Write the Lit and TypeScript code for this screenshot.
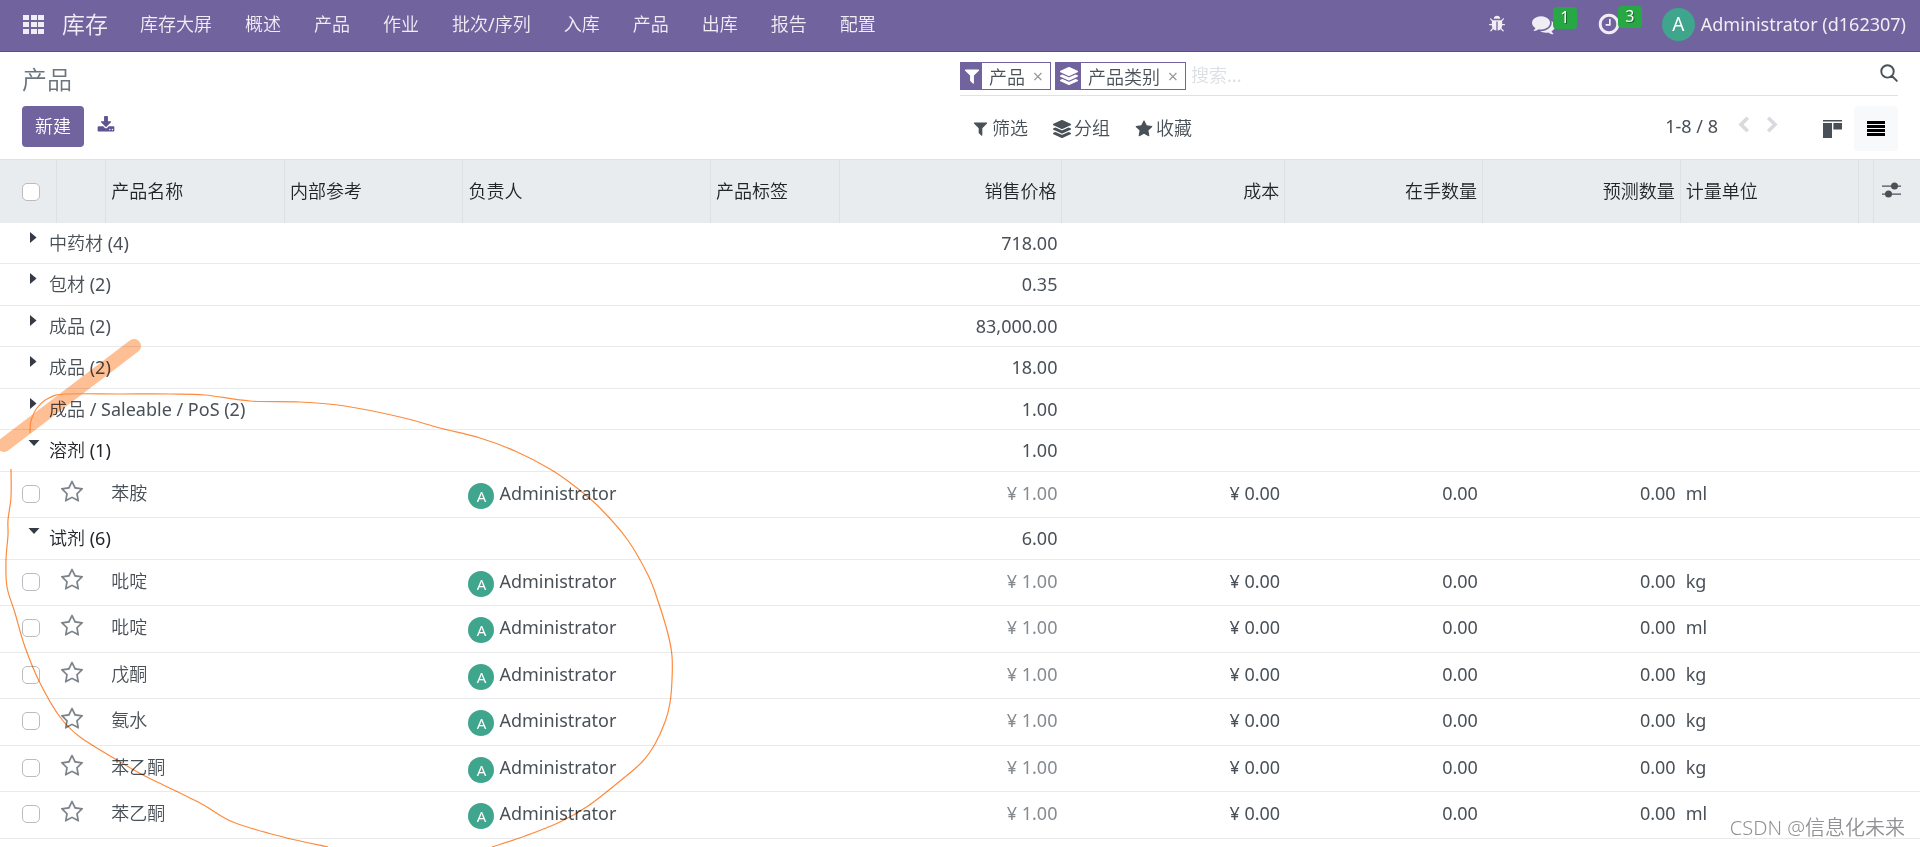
import { LitElement, html, css, svg, nothing } from "lit";
import { customElement, state } from "lit/decorators.js";

type Product = { name: string; unit: string };
type Group = { label: string; total: string; open: boolean; items: Product[] };

const icons = {
  bug: "M1696 960q0 26-19 45t-45 19h-224q0 171-67 290l208 209q19 19 19 45t-19 45q-18 19-45 19t-45-19l-198-197q-5 5-15 13t-42 28.5-65 36.5-82 29-97 13v-896h-128v896q-51 0-101.5-13.5t-87-33-66-39-43.5-32.5l-15-14-183 207q-20 21-48 21-24 0-43-16-19-18-20.5-44.5t15.5-46.5l202-227q-58-114-58-274h-224q-26 0-45-19t-19-45 19-45 45-19h224v-294l-173-173q-19-19-19-45t19-45 45-19 45 19l173 173h844l173-173q19-19 45-19t45 19 19 45-19 45l-173 173v294h224q26 0 45 19t19 45zm-480-576h-640q0-133 93.5-226.5t226.5-93.5 226.5 93.5 93.5 226.5z",
  comments: "M1408 768q0 139-94 257t-256.5 186.5-353.5 68.5q-86 0-176-16-124 88-278 128-36 9-86 16h-3q-11 0-20.5-8t-11.5-21q-1-3-1-6.5t.5-6.5 2-6l2.5-5 3.5-5.5 4-5 4.5-5 4-4.5q5-6 23-25t26-29.5 22.5-29 25-38.5 20.5-44q-124-72-195-177t-71-224q0-139 94-257t256.5-186.5 353.5-68.5 353.5 68.5 256.5 186.5 94 257zm384 256q0 120-71 224.5t-195 176.5q10 24 20.5 44t25 38.5 22.5 29 26 29.5 23 25q1 1 4 4.5t4.5 5 4 5 3.5 5.5l2.500 5 2 6 .5 6.500-1 6.500q-3 14-13 22t-22 7q-50-7-86-16-154-40-278-128-90 16-176 16-271 0-472-132 58 4 88 4 161 0 309-45t264-129q125-92 192-212t67-254q0-77-23-152 129 71 204 178t75 230z",
  clock: "M1024 544v448q0 14-9 23t-23 9h-320q-14 0-23-9t-9-23v-64q0-14 9-23t23-9h224v-352q0-14 9-23t23-9h64q14 0 23 9t9 23zm416 352q0-148-73-273t-198-198-273-73-273 73-198 198-73 273 73 273 198 198 273 73 273-73 198-198 73-273zm224 0q0 209-103 385.5t-279.5 279.5-385.5 103-385.5-103-279.5-279.5-103-385.5 103-385.5 279.5-279.5 385.5-103 385.5 103 279.5 279.5 103 385.5z",
  download: "M1344 1344q0-26-19-45t-45-19-45 19-19 45 19 45 45 19 45-19 19-45zm256 0q0-26-19-45t-45-19-45 19-19 45 19 45 45 19 45-19 19-45zm128-224v320q0 40-28 68t-68 28h-1472q-40 0-68-28t-28-68v-320q0-40 28-68t68-28h465l135 136q58 56 136 56t136-56l136-136h464q40 0 68 28t28 68zm-325-569q17 41-14 70l-448 448q-18 19-45 19t-45-19l-448-448q-31-29-14-70 17-39 59-39h256v-448q0-26 19-45t45-19h256q26 0 45 19t19 45v448h256q42 0 59 39z",
  filter: "M1595 295q17 41-14 70l-493 493v742q0 42-39 59-13 5-25 5-27 0-45-19l-256-256q-19-19-19-45v-486l-493-493q-31-29-14-70 17-39 59-39h1280q42 0 59 39z",
  star: "M1728 647q0 22-26 48l-363 354 86 500q1 7 1 20 0 21-10.5 35.5t-30.5 14.5q-19 0-40-12l-449-236-449 236q-22 12-40 12-21 0-31.5-14.5t-10.5-35.5q0-6 2-20l86-500-364-354q-25-27-25-48 0-37 56-46l502-73 225-455q19-41 49-41t49 41l225 455 502 73q56 9 56 46z",
  starOutline: "M1201 1004l306-297-422-62-189-382-189 382-422 62 306 297-73 421 378-199 377 199zm527-357q0 22-26 48l-363 354 86 500q1 7 1 20 0 50-41 50-19 0-40-12l-449-236-449 236q-22 12-40 12-21 0-31.5-14.5t-10.5-35.5q0-6 2-20l86-500-364-354q-25-27-25-48 0-37 56-46l502-73 225-455q19-41 49-41t49 41l225 455 502 73q56 9 56 46z",
  layers: "M12.41 148.02l232.94 105.67c6.8 3.09 14.49 3.09 21.29 0l232.94-105.67c16.55-7.51 16.55-32.52 0-40.03L266.65 2.31a25.607 25.607 0 0 0-21.29 0L12.41 107.98c-16.55 7.51-16.55 32.53 0 40.04zm487.18 88.28l-58.09-26.33-161.64 73.27c-7.56 3.43-15.59 5.17-23.86 5.17s-16.29-1.74-23.86-5.17L70.51 209.97l-58.1 26.33c-16.55 7.5-16.55 32.5 0 40l232.94 105.59c6.8 3.08 14.49 3.08 21.29 0L499.59 276.3c16.55-7.5 16.55-32.5 0-40zm0 127.8l-57.87-26.23-161.86 73.37c-7.56 3.43-15.59 5.17-23.86 5.17s-16.29-1.74-23.86-5.17L70.29 337.87 12.41 364.1c-16.55 7.5-16.55 32.5 0 40l232.94 105.59c6.8 3.08 14.49 3.08 21.29 0L499.59 404.1c16.55-7.5 16.55-32.5 0-40z",
};

const icon = (path: string, size: number, box = "0 0 1792 1792") => html`
  <svg class="icon" width=${size} height=${size} viewBox=${box} aria-hidden="true">${svg`<path d=${path} />`}</svg>`;

/** Smooth curve through the given points (Catmull-Rom turned into cubic segments). */
function curve(points: number[][]): string {
  let d = `M${points[0][0]} ${points[0][1]}`;
  for (let i = 0; i < points.length - 1; i++) {
    const a = points[Math.max(i - 1, 0)];
    const b = points[i];
    const c = points[i + 1];
    const e = points[Math.min(i + 2, points.length - 1)];
    d += `C${b[0] + (c[0] - a[0]) / 6} ${b[1] + (c[1] - a[1]) / 6} ${c[0] - (e[0] - b[0]) / 6} ${c[1] - (e[1] - b[1]) / 6} ${c[0]} ${c[1]}`;
  }
  return d;
}

const loopTop = curve([
  [30, 433], [31, 421], [37, 408], [49, 398], [66, 394], [120, 394], [170, 394], [205, 395], [250, 401],
  [300, 402], [345, 406], [400, 417], [440, 428], [480, 438], [515, 451], [550, 469], [577, 488], [600, 508],
  [627, 539], [648, 575], [658, 601], [668, 634], [672, 656], [672, 680], [670, 703], [665, 722], [655, 744],
  [642, 762], [620, 781], [588, 806], [560, 822], [525, 836], [492, 847],
]);
const loopLeft = curve([
  [11, 469], [11, 497], [8, 520], [8, 535], [6, 560], [7, 587], [15, 613], [25, 647], [40, 683], [60, 717],
  [80, 737], [117, 760], [143, 775], [200, 803], [233, 822], [283, 837], [328, 847],
]);

const apps = ["库存大屏", "概述", "产品", "作业", "批次/序列", "入库", "产品", "出库", "报告", "配置"];

@customElement("app-root")
export class AppRoot extends LitElement {
  @state() private groups: Group[] = [
    { label: "中药材 (4)", total: "718.00", open: false, items: [] },
    { label: "包材 (2)", total: "0.35", open: false, items: [] },
    { label: "成品 (2)", total: "83,000.00", open: false, items: [] },
    { label: "成品 (2)", total: "18.00", open: false, items: [] },
    { label: "成品 / Saleable / PoS (2)", total: "1.00", open: false, items: [] },
    { label: "溶剂 (1)", total: "1.00", open: true, items: [{ name: "苯胺", unit: "ml" }] },
    {
      label: "试剂 (6)", total: "6.00", open: true, items: [
        { name: "吡啶", unit: "kg" },
        { name: "吡啶", unit: "ml" },
        { name: "戊酮", unit: "kg" },
        { name: "氨水", unit: "kg" },
        { name: "苯乙酮", unit: "kg" },
        { name: "苯乙酮", unit: "ml" },
      ],
    },
  ];

  static styles = css`
    :host {
      display: block;
      position: relative;
      min-height: 100vh;
      overflow: hidden;
      background: #fff;
      color: #495057;
      font: 400 18px/27px "Noto Sans", "Noto Sans CJK SC DemiLight", "Noto Sans CJK SC", sans-serif;
    }
    * { box-sizing: border-box; }
    button, input { font: inherit; color: inherit; margin: 0; }
    button { padding: 0; border: 0; background: none; cursor: pointer; }
    a { color: inherit; text-decoration: none; }
    .icon { display: block; flex: none; fill: currentColor; }

    .navbar {
      display: flex;
      align-items: center;
      height: 52px;
      padding: 0 14px 3px 23px;
      background: #71639e;
      border-bottom: 1px solid #5a4f7f;
      color: #f0eef5;
      white-space: nowrap;
    }
    .brand { margin: 0 32px 0 18px; font-size: 23px; }
    .menu { display: flex; gap: 33px; flex: 1; }
    .tray { display: flex; align-items: center; }
    .tray-button { position: relative; display: block; }
    .bug { margin-right: 26px; }
    .chat { margin-right: 42px; }
    .activity { margin-right: 41px; }
    .badge {
      position: absolute;
      left: 21px;
      top: -6px;
      min-width: 24px;
      height: 22px;
      border-radius: 4px;
      background: #28a745;
      color: #fff;
      font-size: 16px;
      line-height: 20px;
      text-align: center;
      text-shadow: 1px 1px 0 rgba(0, 0, 0, 0.4);
    }
    .user { display: flex; align-items: center; gap: 6px; }
    .avatar {
      display: inline-flex;
      align-items: center;
      justify-content: center;
      flex: none;
      width: 26px;
      height: 26px;
      border-radius: 50%;
      background: #40a58d;
      color: #fff;
      font-size: 15px;
    }
    .avatar.large { width: 33px; height: 33px; font-size: 19px; }

    .panel {
      display: grid;
      grid-template-columns: 1fr 1fr;
      padding: 10px 22px 8px;
      border-bottom: 1px solid #dee2e6;
    }
    .title { margin: 0; font-size: 25px; font-weight: 400; line-height: 34px; color: #6c757d; }
    .search {
      display: flex;
      align-items: flex-start;
      gap: 4px;
      height: 34px;
      border-bottom: 1px solid #dee2e6;
    }
    .facet { display: flex; height: 28px; border: 1px solid #71639e; }
    .facet-icon {
      display: flex;
      align-items: center;
      justify-content: center;
      width: 21px;
      background: #71639e;
      color: #fff;
    }
    .facet-icon.wide { width: 25px; }
    .facet-label { padding: 1px 7px 0; line-height: 26px; }
    .facet-remove { width: 12px; margin-right: 6px; color: #999; line-height: 26px; }
    .search-input {
      flex: 1;
      min-width: 0;
      height: 27px;
      padding: 0 1px;
      border: 0;
      outline: 0;
      background: none;
    }
    .search-input::placeholder { color: #dcdfe4; opacity: 1; }
    .search-button { padding-top: 2px; }
    .actions { display: flex; align-items: flex-start; gap: 13px; padding-top: 10px; }
    .create {
      padding: 7px 13px;
      border-radius: 4px;
      background: #71639e;
      color: #fff;
    }
    .export { padding-top: 10px; color: #5f5391; }
    .tools { display: flex; align-items: flex-start; padding: 10px 0 0 12px; }
    .filters { display: flex; flex: 1; gap: 25px; padding-top: 9px; }
    .filter { display: flex; align-items: center; gap: 3px; }
    .pager { padding-top: 7px; margin-right: 20px; }
    .pager-nav { display: flex; gap: 16px; padding: 10px 0; margin-right: 32px; color: #d7dade; }
    .view { display: flex; align-items: center; justify-content: center; width: 44px; height: 45px; border-radius: 4px; }
    .view.active { background: #f8f9fa; color: #000; }
    .views { display: flex; }

    .list { width: 100%; border-collapse: separate; border-spacing: 0; table-layout: fixed; }
    .c-check { width: 56px; }
    .c-star { width: 49px; }
    .c-name, .c-ref, .c-unit { width: 9.3%; }
    .c-owner { width: 12.9%; }
    .c-tags { width: 6.7%; }
    .c-price, .c-cost { width: 11.6%; }
    .c-qty { width: 10.3%; }
    .c-space { width: 15px; }
    .c-config { width: 45px; }
    th {
      height: 63px;
      padding: 0 5px;
      background: #e8ecef;
      border-right: 1px solid #dde1e5;
      color: #212529;
      font-weight: 400;
      text-align: left;
    }
    th:last-child { border-right: 0; padding: 0 0 0 8px; color: #495057; }
    th.check { padding: 0 0 0 22px; }
    .num { text-align: right; }
    td { padding: 8px 5px 0; border-bottom: 1px solid #e9eaec; vertical-align: top; white-space: nowrap; }
    td.check { padding: 13px 0 0 22px; }
    td.favorite { padding: 8px 0 0 3px; }
    td.muted { color: #868b90; }
    .row { height: 46px; }
    .group { height: 41px; }
    .row:nth-child(even) { height: 47px; }
    .group:nth-child(even) { height: 42px; }
    .group td { padding-top: 7px; }
    .group td:first-child { padding-left: 28px; }
    .toggle { display: flex; }
    .toggle.open { color: #212529; }
    .caret { width: 21px; padding-top: 2px; color: #343a46; }
    .checkbox {
      appearance: none;
      display: block;
      width: 18px;
      height: 18px;
      border: 1px solid #b9bcc0;
      border-radius: 5px;
      background: #fff;
    }
    .favorite button { display: block; color: #7d838a; }
    .owner { display: flex; gap: 5px; }
    .owner .avatar { margin-top: 3px; }

    .marks { position: absolute; left: 0; top: 0; pointer-events: none; mix-blend-mode: multiply; fill: none; }
    .watermark {
      position: absolute;
      right: 15px;
      bottom: 4px;
      color: #8f9194;
      font-size: 20px;
      font-weight: 300;
      line-height: 30px;
      text-shadow: 1px 1px 1px #fff, 0 0 2px #fff;
      pointer-events: none;
    }
  `;

  private toggle(target: Group) {
    this.groups = this.groups.map((g) => (g === target ? { ...g, open: !g.open } : g));
  }

  private renderNavbar() {
    return html`
      <header class="navbar">
        <button aria-label="应用">
          <svg class="icon" width="21" height="19" viewBox="0 0 21 19" aria-hidden="true">
            ${[0, 7, 14].map((y) => [0, 8, 15].map((x) => svg`<rect x=${x} y=${y} width="6" height="5" />`))}
          </svg>
        </button>
        <a class="brand" href="#">库存</a>
        <nav class="menu">${apps.map((label) => html`<a href="#">${label}</a>`)}</nav>
        <div class="tray">
          <button class="tray-button bug" aria-label="调试">${icon(icons.bug, 18)}</button>
          <button class="tray-button chat" aria-label="消息">${icon(icons.comments, 23)}<span class="badge">1</span></button>
          <button class="tray-button activity" aria-label="活动">${icon(icons.clock, 24)}<span class="badge">3</span></button>
          <button class="user"><span class="avatar large">A</span>Administrator (d162307)</button>
        </div>
      </header>`;
  }

  private renderPanel() {
    return html`
      <section class="panel">
        <h1 class="title">产品</h1>
        <div class="search">
          <div class="facet">
            <span class="facet-icon">${icon(icons.filter, 18)}</span>
            <span class="facet-label">产品</span>
            <button class="facet-remove" aria-label="移除 产品">×</button>
          </div>
          <div class="facet">
            <span class="facet-icon wide">${icon(icons.layers, 18, "0 0 512 512")}</span>
            <span class="facet-label">产品类别</span>
            <button class="facet-remove" aria-label="移除 产品类别">×</button>
          </div>
          <input class="search-input" type="text" placeholder="搜索..." aria-label="搜索" />
          <button class="search-button" aria-label="搜索">
            <svg class="icon" width="18" height="18" viewBox="0 0 18 18" aria-hidden="true">
              <path d="M7.5 1.2a6.2 6.2 0 1 0 0 12.4a6.2 6.2 0 1 0 0-12.4M12 12l5.4 5.4" fill="none" stroke="currentColor" stroke-width="1.9" />
            </svg>
          </button>
        </div>
        <div class="actions">
          <button class="create">新建</button>
          <button class="export" aria-label="导出">${icon(icons.download, 18)}</button>
        </div>
        <div class="tools">
          <div class="filters">
            <button class="filter">${icon(icons.filter, 17)}筛选</button>
            <button class="filter">${icon(icons.layers, 18, "0 0 512 512")}分组</button>
            <button class="filter">${icon(icons.star, 18)}收藏</button>
          </div>
          <span class="pager">1-8 / 8</span>
          <div class="pager-nav">
            <button aria-label="上一页">
              <svg class="icon" width="12" height="17" viewBox="0 0 12 17" aria-hidden="true"><path d="M9.8 1.8L3 8.5l6.8 6.7" fill="none" stroke="currentColor" stroke-width="3.6" /></svg>
            </button>
            <button aria-label="下一页">
              <svg class="icon" width="12" height="17" viewBox="0 0 12 17" aria-hidden="true"><path d="M2.2 1.8L9 8.5l-6.8 6.7" fill="none" stroke="currentColor" stroke-width="3.6" /></svg>
            </button>
          </div>
          <div class="views">
            <button class="view" aria-label="看板">
              <svg class="icon" width="19" height="18" viewBox="0 0 19 18" aria-hidden="true"><path d="M0 0h19v1.4H0zM0 3h9v15H0zM10.4 3H19v6.4h-8.600z" /></svg>
            </button>
            <button class="view active" aria-label="列表">
              <svg class="icon" width="18" height="15" viewBox="0 0 18 15" aria-hidden="true"><path d="M0 0h18v3H0zM0 4h18v3H0zM0 8h18v3H0zM0 12h18v3H0z" /></svg>
            </button>
          </div>
        </div>
      </section>`;
  }

  private renderGroup(group: Group) {
    return html`
      <tr class="group">
        <td colspan="6">
          <button class="toggle ${group.open ? "open" : ""}" aria-expanded=${group.open} @click=${() => this.toggle(group)}>
            <span class="caret">
              <svg class="icon" width="12" height="11" viewBox="0 0 12 11" aria-hidden="true">
                <path d=${group.open ? "M0.500 1h11L6 7z" : "M2 0l6.500 5.500L2 11z"} />
              </svg>
            </span>
            ${group.label}
          </button>
        </td>
        <td class="num">${group.total}</td>
        <td colspan="6"></td>
      </tr>
      ${group.open ? group.items.map((item) => this.renderItem(item)) : nothing}`;
  }

  private renderItem(item: Product) {
    return html`
      <tr class="row">
        <td class="check"><input class="checkbox" type="checkbox" aria-label="选择 ${item.name}" /></td>
        <td class="favorite"><button aria-label="收藏 ${item.name}">${icon(icons.starOutline, 24)}</button></td>
        <td>${item.name}</td>
        <td></td>
        <td><div class="owner"><span class="avatar">A</span><span>Administrator</span></div></td>
        <td></td>
        <td class="num muted">¥ 1.00</td>
        <td class="num">¥ 0.00</td>
        <td class="num">0.00</td>
        <td class="num">0.00</td>
        <td colspan="3">${item.unit}</td>
      </tr>`;
  }

  render() {
    return html`
      ${this.renderNavbar()}
      ${this.renderPanel()}
      <table class="list">
        <colgroup>
          <col class="c-check" /><col class="c-star" /><col class="c-name" /><col class="c-ref" /><col class="c-owner" />
          <col class="c-tags" /><col class="c-price" /><col class="c-cost" /><col class="c-qty" /><col class="c-qty" />
          <col class="c-unit" /><col class="c-space" /><col class="c-config" />
        </colgroup>
        <thead>
          <tr>
            <th class="check"><input class="checkbox" type="checkbox" aria-label="全选" /></th>
            <th></th>
            <th>产品名称</th>
            <th>内部参考</th>
            <th>负责人</th>
            <th>产品标签</th>
            <th class="num">销售价格</th>
            <th class="num">成本</th>
            <th class="num">在手数量</th>
            <th class="num">预测数量</th>
            <th>计量单位</th>
            <th></th>
            <th>
              <button aria-label="可选列">
                <svg class="icon" width="19" height="16" viewBox="0 0 19 16" aria-hidden="true">
                  <path d="M0 3.500h19v1.200H0zM0 11.500h19v1.200H0z" />
                  <circle cx="12.500" cy="4" r="3.500" /><circle cx="6.500" cy="12" r="3.500" />
                </svg>
              </button>
            </th>
          </tr>
        </thead>
        <tbody>${this.groups.map((group) => this.renderGroup(group))}</tbody>
      </table>
      <svg class="marks" width="700" height="847" viewBox="0 0 700 847" aria-hidden="true">
        <path d="M4 445L134 346" stroke="#ffbf95" stroke-width="14" stroke-linecap="round" />
        <path d=${loopTop} stroke="#ff8a3c" stroke-width="1.200" />
        <path d=${loopLeft} stroke="#ff8a3c" stroke-width="1.200" />
      </svg>
      <div class="watermark">CSDN @信息化未来</div>`;
  }
}
